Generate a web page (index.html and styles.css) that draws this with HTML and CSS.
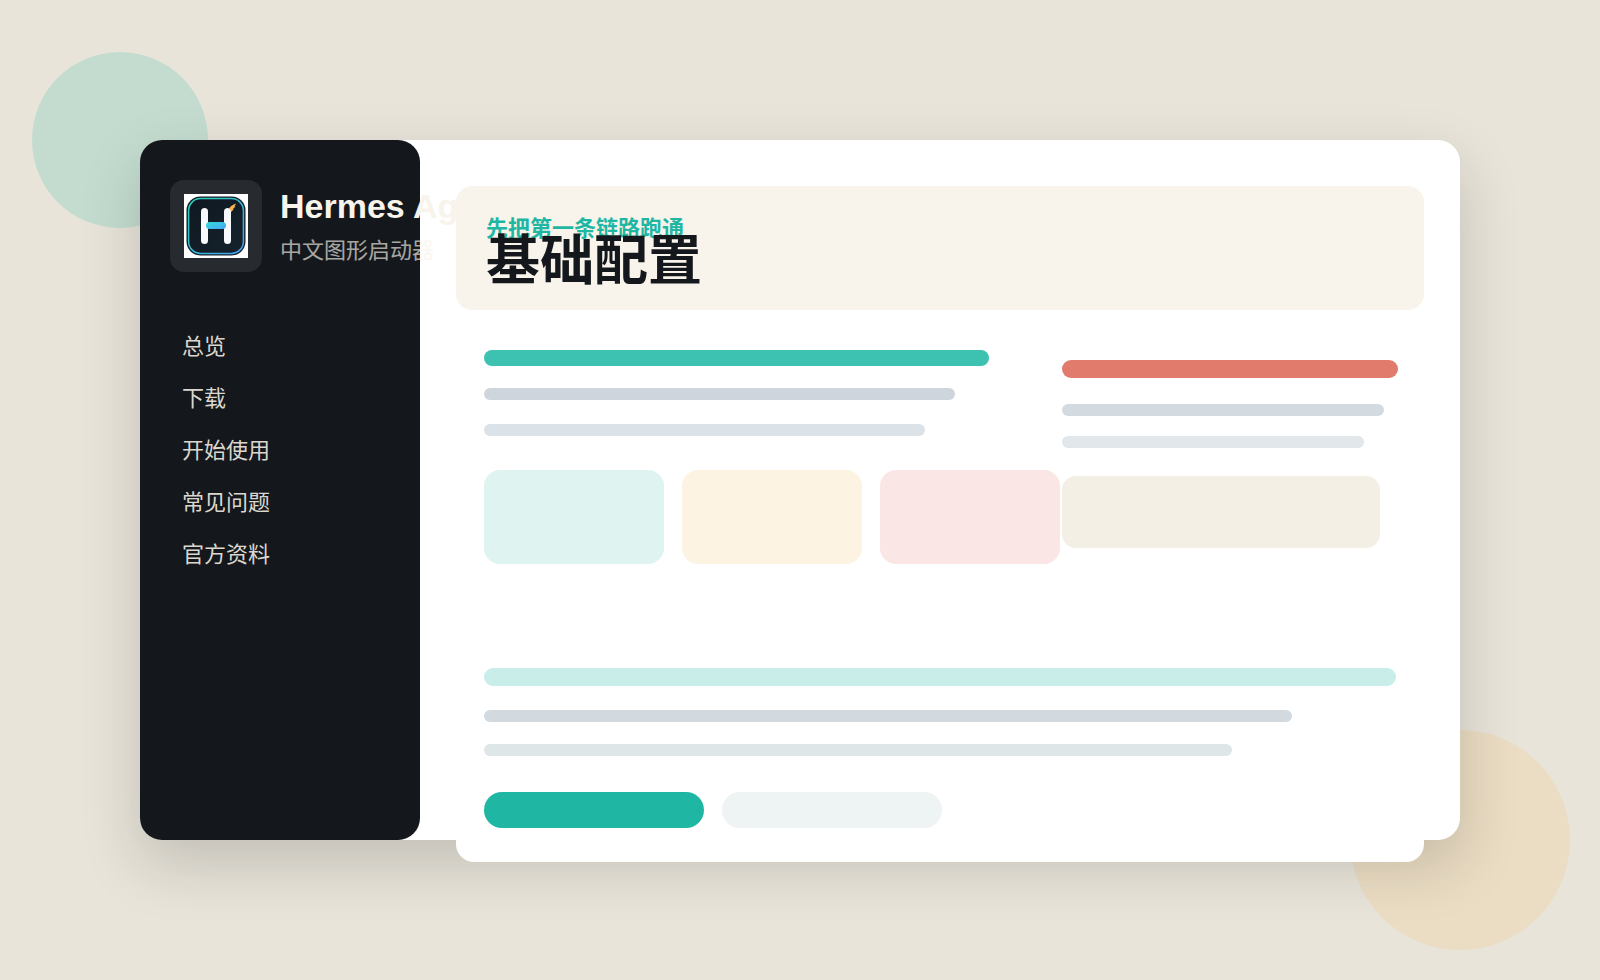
FILE: index.html
```html
<!DOCTYPE html>
<html lang="zh-CN">
<head>
<meta charset="utf-8">
<title>Hermes Agent</title>
<link rel="stylesheet" href="styles.css">
</head>
<body>
<div class="stage">
  <span class="orb orb-mint"></span>
  <span class="orb orb-amber"></span>
  <div class="window">
    <aside class="sidebar">
      <div class="brand">
        <div class="brand-tile">
          <svg class="brand-logo" viewBox="0 0 64 64" aria-hidden="true">
            <defs>
              <linearGradient id="edge" x1="0" y1="0" x2="1" y2="1">
                <stop offset="0" stop-color="#24d3b7"/>
                <stop offset="1" stop-color="#4a9bf0"/>
              </linearGradient>
              <linearGradient id="bar" x1="0" y1="0" x2="1" y2="1">
                <stop offset="0" stop-color="#2fdcd8"/>
                <stop offset="1" stop-color="#4aa5f8"/>
              </linearGradient>
              <linearGradient id="face" x1="0" y1="0" x2="1" y2="1">
                <stop offset="0" stop-color="#0f1720"/>
                <stop offset="1" stop-color="#15232d"/>
              </linearGradient>
            </defs>
            <rect width="64" height="64" fill="#fff"/>
            <rect x="2.5" y="2.5" width="59" height="59" rx="14" fill="url(#face)"/>
            <rect x="4.6" y="4.6" width="54.8" height="54.8" rx="12" fill="none" stroke="url(#edge)" stroke-width="1.5"/>
            <path d="M44 17C45 13 48 11 52 9.500L50.500 12.500L51.500 12.500L49 15L49.500 15.500L46 19Z" fill="#f6b350"/>
            <rect x="17" y="14" width="7" height="36" rx="3.500" fill="#f8f9fd"/>
            <path d="M43.500 14C45 14 47 16 47 18V46.500A3.500 3.500 0 0 1 40 46.500V17.500C40 15.500 41.500 14 43.500 14Z" fill="#f8f9fd"/>
            <rect x="22" y="28" width="20" height="7" rx="3.500" fill="url(#bar)"/>
          </svg>
        </div>
        <div class="brand-text">
          <strong class="brand-name">Hermes Agent</strong>
          <span class="brand-sub">中文图形启动器</span>
        </div>
      </div>
      <nav class="nav">
        <a class="nav-link" href="#overview">总览</a>
        <a class="nav-link" href="#download">下载</a>
        <a class="nav-link" href="#start">开始使用</a>
        <a class="nav-link" href="#faq">常见问题</a>
        <a class="nav-link" href="#docs">官方资料</a>
      </nav>
    </aside>
    <main class="main">
      <div class="panel">
        <header class="hero">
          <p class="hero-eyebrow">先把第一条链路跑通</p>
          <h1 class="hero-title">基础配置</h1>
        </header>
        <div class="columns">
          <div class="column">
            <div class="line line-teal"></div>
            <div class="line line-slate"></div>
            <div class="line line-mist"></div>
            <div class="tiles">
              <div class="tile tile-mint"></div>
              <div class="tile tile-cream"></div>
              <div class="tile tile-pink"></div>
            </div>
          </div>
          <div class="column column-side">
            <div class="line side-coral"></div>
            <div class="line side-slate"></div>
            <div class="line side-mist"></div>
            <div class="side-block"></div>
          </div>
        </div>
        <div class="footer-lines">
          <div class="line foot-mint"></div>
          <div class="line foot-slate"></div>
          <div class="line foot-mist"></div>
          <div class="pills">
            <div class="pill pill-main"></div>
            <div class="pill"></div>
          </div>
        </div>
      </div>
    </main>
  </div>
</div>
</body>
</html>
```
FILE: styles.css
```css
* {
  box-sizing: border-box;
}

body {
  margin: 0;
  background: #e8e4d9;
  color: #14181c;
  font-family: "Liberation Sans", "Noto Sans CJK SC", sans-serif;
}

.stage {
  position: relative;
  min-height: 100vh;
  padding: 140px;
  overflow: hidden;
}

.orb {
  position: absolute;
  border-radius: 50%;
}

.orb-mint {
  top: 52px;
  left: 32px;
  width: 176px;
  height: 176px;
  background: #c4dccf;
}

.orb-amber {
  right: 30px;
  bottom: 30px;
  width: 220px;
  height: 220px;
  background: #ebddc3;
}

.window {
  position: relative;
  display: grid;
  grid-template-columns: 280px minmax(0, 1fr);
  min-height: 700px;
  border-radius: 22px;
  background: #fff;
  box-shadow: 0 24px 60px rgba(20, 24, 28, 0.18);
}

.sidebar {
  padding: 40px 30px;
  border-radius: 22px;
  background: #14181c;
}

.brand {
  display: flex;
  align-items: center;
  gap: 18px;
}

.brand-tile {
  display: grid;
  place-items: center;
  flex: none;
  width: 92px;
  height: 92px;
  border-radius: 14px;
  background: #272a2e;
}

.brand-logo {
  width: 64px;
  height: 64px;
}

.brand-text {
  display: grid;
  gap: 9px;
  padding-top: 1px;
  color: #f8f3eb;
  white-space: nowrap;
}

.brand-name {
  font-size: 34px;
  line-height: 40px;
}

.brand-sub {
  font-size: 22px;
  line-height: 32px;
  opacity: 0.65;
}

.nav {
  display: grid;
  gap: 20px;
  padding: 59px 12px 0;
}

.nav-link {
  color: #dbd7cf;
  font-size: 22px;
  line-height: 32px;
  text-decoration: none;
}

.main {
  position: relative;
  padding: 46px 36px 0;
}

.panel {
  margin-bottom: -22px;
  border-radius: 18px;
  background: #fff;
}

.hero {
  padding: 27px 30px 20px;
  border-radius: 16px;
  background: #f8f3eb;
}

.hero-eyebrow {
  margin: 0;
  color: #1fb7a4;
  font-size: 22px;
  font-weight: 700;
  line-height: 32px;
}

.hero-title {
  margin: -13px 0 0;
  font-size: 54px;
  font-weight: 700;
  line-height: 58px;
}

.columns {
  display: grid;
  grid-template-columns: 576fr 336fr;
  gap: 2px;
  padding: 40px 26px 0 28px;
}

.column-side {
  padding-top: 10px;
}

.line {
  height: 12px;
  border-radius: 6px;
}

.line-teal {
  width: 87.7%;
  height: 16px;
  border-radius: 8px;
  background: #3dc1b0;
}

.line-slate {
  width: 81.8%;
  margin-top: 22px;
  background: #ced5dc;
}

.line-mist {
  width: 76.6%;
  margin-top: 24px;
  background: #dbe2e8;
}

.tiles {
  display: grid;
  grid-template-columns: repeat(3, 1fr);
  gap: 18px;
  margin-top: 34px;
}

.tile {
  height: 94px;
  border-radius: 16px;
}

.tile-mint {
  background: #dff4f1;
}

.tile-cream {
  background: #fdf3e2;
}

.tile-pink {
  background: #fae6e5;
}

.side-coral {
  height: 18px;
  border-radius: 9px;
  background: #e17b6c;
}

.side-slate {
  width: 95.8%;
  margin-top: 26px;
  background: #d3dbe1;
}

.side-mist {
  width: 89.9%;
  margin-top: 20px;
  background: #e1e7ea;
}

.side-block {
  width: 94.7%;
  height: 72px;
  margin-top: 28px;
  border-radius: 14px;
  background: #f4efe4;
}

.footer-lines {
  padding: 104px 28px 34px;
}

.foot-mint {
  height: 18px;
  border-radius: 9px;
  background: #c9eeea;
}

.foot-slate {
  width: 88.6%;
  margin-top: 24px;
  background: #d2dae0;
}

.foot-mist {
  width: 82%;
  margin-top: 22px;
  background: #dee6e8;
}

.pills {
  display: flex;
  gap: 18px;
  margin-top: 36px;
}

.pill {
  width: 220px;
  height: 36px;
  border-radius: 18px;
  background: #eef3f3;
}

.pill-main {
  background: #1fb7a4;
}
```
